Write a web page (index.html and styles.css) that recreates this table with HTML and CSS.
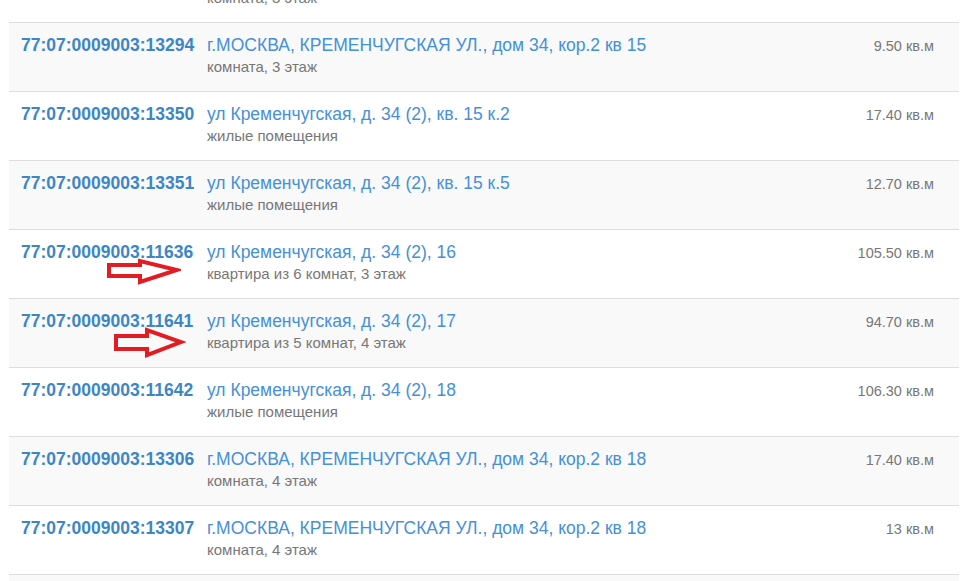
FILE: index.html
```html
<!DOCTYPE html>
<html lang="ru">
<head>
  <meta charset="UTF-8" />
  <title>Объекты</title>
  <link rel="stylesheet" href="styles.css">
</head>
<body>
  <div class="page">
    <div class="objects">
      <div class="row">
        <a href="#" class="num">77:07:0009003:13293</a>
        <div class="info">
          <a href="#" class="addr">г.МОСКВА, КРЕМЕНЧУГСКАЯ УЛ., дом 34, кор.2 кв 15</a>
          <div class="sub">комната, 3 этаж</div>
        </div>
        <div class="area">9.50 кв.м</div>
      </div>
      <div class="row">
        <a href="#" class="num">77:07:0009003:13294</a>
        <div class="info">
          <a href="#" class="addr">г.МОСКВА, КРЕМЕНЧУГСКАЯ УЛ., дом 34, кор.2 кв 15</a>
          <div class="sub">комната, 3 этаж</div>
        </div>
        <div class="area">9.50 кв.м</div>
      </div>
      <div class="row">
        <a href="#" class="num">77:07:0009003:13350</a>
        <div class="info">
          <a href="#" class="addr">ул Кременчугская, д. 34 (2), кв. 15 к.2</a>
          <div class="sub">жилые помещения</div>
        </div>
        <div class="area">17.40 кв.м</div>
      </div>
      <div class="row">
        <a href="#" class="num">77:07:0009003:13351</a>
        <div class="info">
          <a href="#" class="addr">ул Кременчугская, д. 34 (2), кв. 15 к.5</a>
          <div class="sub">жилые помещения</div>
        </div>
        <div class="area">12.70 кв.м</div>
      </div>
      <div class="row">
        <a href="#" class="num">77:07:0009003:11636</a>
        <div class="info">
          <a href="#" class="addr">ул Кременчугская, д. 34 (2), 16</a>
          <div class="sub">квартира из 6 комнат, 3 этаж</div>
        </div>
        <div class="area">105.50 кв.м</div>
        <svg class="arrow arrow-1" width="74" height="28" viewBox="0 0 74 28">
          <polygon points="2,7 33,7 33,3 70,12 33,24 33,18 2,18" fill="none" stroke="#e31b23" stroke-width="4"/>
        </svg>
      </div>
      <div class="row">
        <a href="#" class="num">77:07:0009003:11641</a>
        <div class="info">
          <a href="#" class="addr">ул Кременчугская, д. 34 (2), 17</a>
          <div class="sub">квартира из 5 комнат, 4 этаж</div>
        </div>
        <div class="area">94.70 кв.м</div>
        <svg class="arrow arrow-2" width="72" height="31" viewBox="0 0 72 31">
          <polygon points="2,9 33,9 33,3 67,15 33,28 33,22 2,22" fill="none" stroke="#e31b23" stroke-width="4"/>
        </svg>
      </div>
      <div class="row">
        <a href="#" class="num">77:07:0009003:11642</a>
        <div class="info">
          <a href="#" class="addr">ул Кременчугская, д. 34 (2), 18</a>
          <div class="sub">жилые помещения</div>
        </div>
        <div class="area">106.30 кв.м</div>
      </div>
      <div class="row">
        <a href="#" class="num">77:07:0009003:13306</a>
        <div class="info">
          <a href="#" class="addr">г.МОСКВА, КРЕМЕНЧУГСКАЯ УЛ., дом 34, кор.2 кв 18</a>
          <div class="sub">комната, 4 этаж</div>
        </div>
        <div class="area">17.40 кв.м</div>
      </div>
      <div class="row">
        <a href="#" class="num">77:07:0009003:13307</a>
        <div class="info">
          <a href="#" class="addr">г.МОСКВА, КРЕМЕНЧУГСКАЯ УЛ., дом 34, кор.2 кв 18</a>
          <div class="sub">комната, 4 этаж</div>
        </div>
        <div class="area">13 кв.м</div>
      </div>
      <div class="row">
        <a href="#" class="num">77:07:0009003:13308</a>
        <div class="info">
          <a href="#" class="addr">г.МОСКВА, КРЕМЕНЧУГСКАЯ УЛ., дом 34, кор.2 кв 18</a>
          <div class="sub">комната, 4 этаж</div>
        </div>
        <div class="area">14 кв.м</div>
      </div>
    </div>
  </div>
</body>
</html>
```

FILE: styles.css
```css
body {
  margin: 0;
  font-family: "Liberation Sans", Arial, sans-serif;
  background: #fff;
  overflow: hidden;
}
.page {
  padding-left: 9px;
  width: 950px;
}
.objects {
  margin-top: -47px;
}
.row {
  position: relative;
  display: grid;
  grid-template-columns: 186px 1fr auto;
  align-items: baseline;
  height: 69px;
  padding: 10px 25px 0 12px;
  box-sizing: border-box;
  border-top: 1px solid #ddd;
}
.row:nth-child(even) {
  background: #f9f9f9;
}
.num {
  color: #3c86c6;
  font-weight: bold;
  font-size: 17.5px;
  line-height: 24px;
  text-decoration: none;
}
.addr {
  color: #4690d6;
  font-size: 17.5px;
  line-height: 24px;
  text-decoration: none;
}
.sub {
  color: #777;
  font-size: 15px;
  line-height: 20px;
}
.area {
  color: #777;
  font-size: 14.5px;
  text-align: right;
}
.arrow {
  position: absolute;
}
.arrow-1 {
  left: 98px;
  top: 28px;
}
.arrow-2 {
  left: 105px;
  top: 28px;
}
```
